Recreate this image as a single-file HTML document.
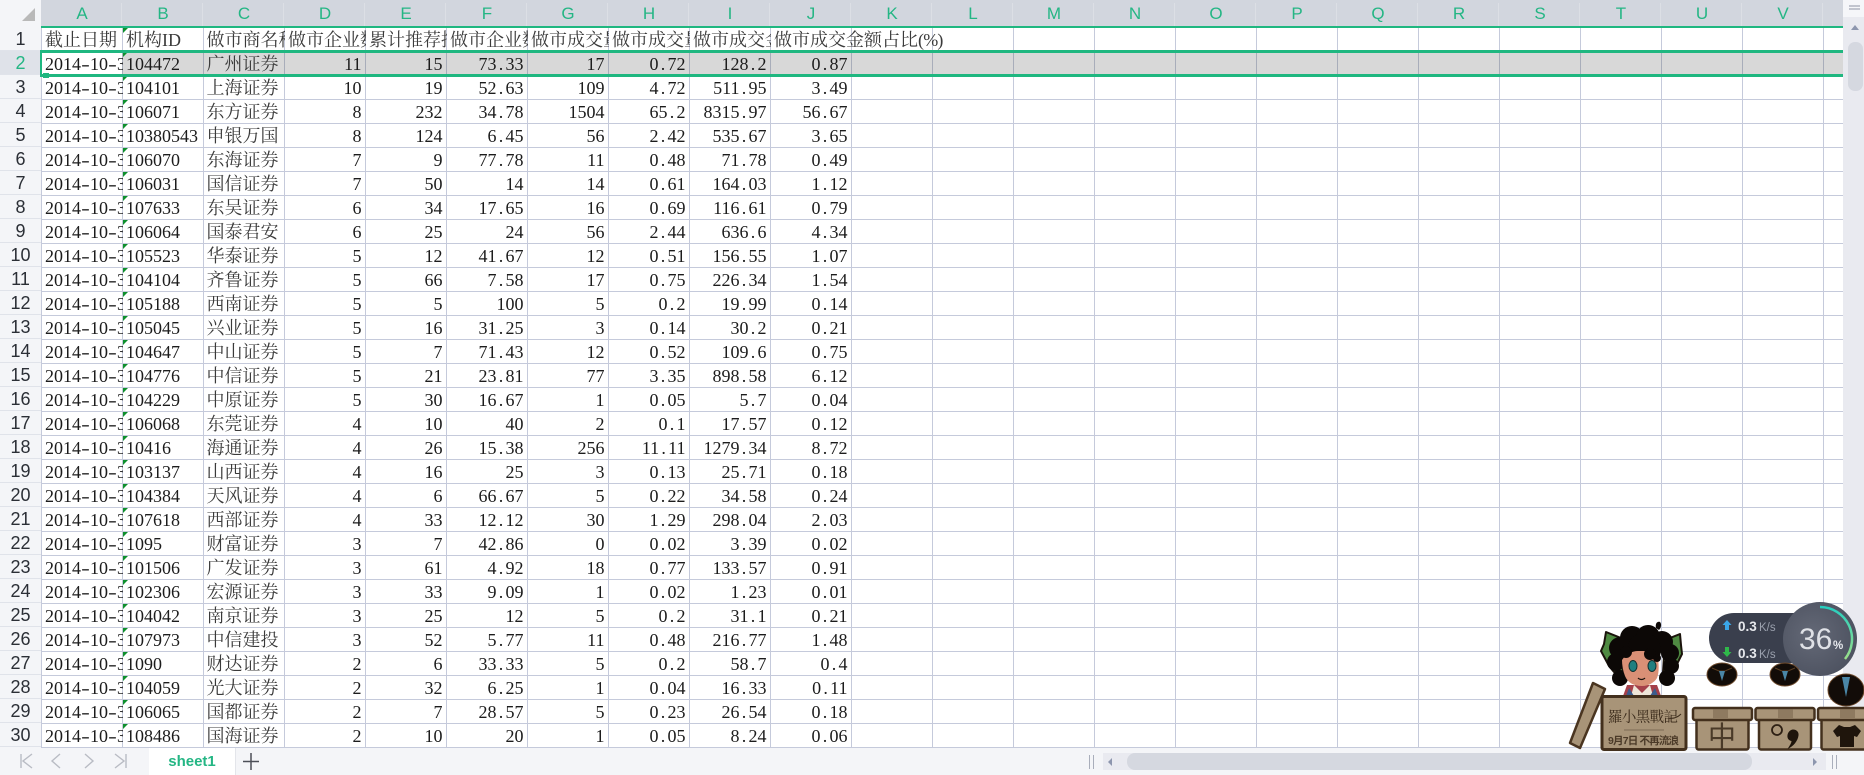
<!DOCTYPE html>
<html lang="zh-CN">
<head>
<meta charset="utf-8">
<title>sheet1</title>
<style>
html,body{margin:0;padding:0;background:#fff}
#p{position:relative;width:1864px;height:775px;overflow:hidden;background:#fff;font-family:"Liberation Serif","Noto Serif CJK SC",serif;font-size:18px;color:#1c1c1c}
#p div{position:absolute}
#grid{left:41px;top:27px;width:1802px;height:721px;background-image:linear-gradient(to right,#c5cadb 1px,transparent 1px),linear-gradient(to bottom,#c5cadb 1px,transparent 1px);background-size:81px 100%,100% 24px}
#sel{left:122px;top:53px;width:1721px;height:21px;background-color:#d8d8d8;background-image:linear-gradient(to right,#a8adba 1px,transparent 1px);background-size:81px 100%}
#colh{left:0;top:0;width:1843px;height:26px;background:#d2d6de}
#colh span{position:absolute;top:3px;width:81px;height:23px;padding-left:2px;line-height:21px;text-align:center;font-family:"Liberation Sans",sans-serif;font-size:17px;color:#24b684;box-sizing:border-box;border-right:1px solid #dcdfe5}
#corner{left:0;top:0;width:41px;height:27px;background:#f4f5f8}
#tri{left:22px;top:8px;width:0;height:0;border-style:solid;border-width:0 0 13px 13px;border-color:transparent transparent #b9b9b9 transparent}
#rowh{left:0;top:27px;width:41px;height:721px;background:#f4f5f8}
#rowh span{position:absolute;left:0;width:41px;height:24px;line-height:25px;text-align:center;font-family:"Liberation Sans",sans-serif;font-size:18px;color:#2b2f36;box-sizing:border-box;border-bottom:1px solid #e0e3ea}
#rowh span.a{background:#dfe2e9;color:#24b684}
.r{left:42px;width:1700px;height:23px;display:flex;line-height:25px}
.r span{position:relative;flex:none;width:81px;height:23px;box-sizing:border-box;padding:0 4.500px 0 3px;overflow:hidden;white-space:nowrap;text-align:right}
.r span:nth-child(1),.r span:nth-child(2),.r span:nth-child(3){text-align:left}
.r span:nth-child(2){padding-left:3px}
.r span:nth-child(3){padding-left:2.500px;color:#3a3a3a}
.r span:nth-child(2)::before{content:"";position:absolute;left:0;top:0;width:0;height:0;border-style:solid;border-width:5px 5px 0 0;border-color:#0e8f2d transparent transparent transparent}
.h{line-height:24px}
.h span{text-align:left!important;color:#3a3a3a;padding-left:3px}
.h span.o{overflow:visible;position:relative;z-index:2}
.h b{font-weight:normal;letter-spacing:-.8px}
i,u{display:inline-block;width:.5em;text-align:center;font-style:normal;text-decoration:none}
u{transform:scaleX(1.45)}
.g{background:#1fb780}
#bot{left:0;top:748px;width:1864px;height:27px;background:#f4f5f8}
#vs{left:1843px;top:0;width:21px;height:748px;background:#e9eaf0}
#vst{left:1843px;top:0;width:21px;height:17px;background:#f5f6f9}
#vth{left:1848px;top:42px;width:15px;height:49px;border-radius:7px;background:#d5d8e0}
#tab{left:149px;top:748px;width:87px;height:27px;background:#fff;border-right:1px solid #e3e5ea;box-sizing:border-box;text-align:center;line-height:27px;font-family:"Liberation Sans",sans-serif;font-weight:bold;font-size:15px;color:#24b684}
#hs{left:1103px;top:753px;width:723px;height:17px;background:#e9eaf0}
#hth{left:1127px;top:753px;width:625px;height:17px;border-radius:8px;background:#d5d8e0}
svg{position:absolute;left:0;top:0}
</style>
</head>
<body>
<div id="p">
<div id="grid"></div>
<div id="sel"></div>
<div style="left:42px;top:53px;width:80px;height:21px;background:#fff"></div>

<div class="r h" style="top:28px"><span>截止日期</span><span>机构ID</span><span>做市商名称</span><span>做市企业数量</span><span>累计推荐挂牌</span><span>做市企业数量</span><span>做市成交量</span><span>做市成交量</span><span>做市成交金额</span><span class="o">做市成交金额占比<b>(%)</b></span></div>
<div class="r" style="top:52px"><span>2014<u>-</u>10<u>-</u>31</span><span>104472</span><span>广州证券</span><span>11</span><span>15</span><span>73<i>.</i>33</span><span>17</span><span>0<i>.</i>72</span><span>128<i>.</i>2</span><span>0<i>.</i>87</span></div>
<div class="r" style="top:76px"><span>2014<u>-</u>10<u>-</u>31</span><span>104101</span><span>上海证券</span><span>10</span><span>19</span><span>52<i>.</i>63</span><span>109</span><span>4<i>.</i>72</span><span>511<i>.</i>95</span><span>3<i>.</i>49</span></div>
<div class="r" style="top:100px"><span>2014<u>-</u>10<u>-</u>31</span><span>106071</span><span>东方证券</span><span>8</span><span>232</span><span>34<i>.</i>78</span><span>1504</span><span>65<i>.</i>2</span><span>8315<i>.</i>97</span><span>56<i>.</i>67</span></div>
<div class="r" style="top:124px"><span>2014<u>-</u>10<u>-</u>31</span><span>10380543</span><span>申银万国</span><span>8</span><span>124</span><span>6<i>.</i>45</span><span>56</span><span>2<i>.</i>42</span><span>535<i>.</i>67</span><span>3<i>.</i>65</span></div>
<div class="r" style="top:148px"><span>2014<u>-</u>10<u>-</u>31</span><span>106070</span><span>东海证券</span><span>7</span><span>9</span><span>77<i>.</i>78</span><span>11</span><span>0<i>.</i>48</span><span>71<i>.</i>78</span><span>0<i>.</i>49</span></div>
<div class="r" style="top:172px"><span>2014<u>-</u>10<u>-</u>31</span><span>106031</span><span>国信证券</span><span>7</span><span>50</span><span>14</span><span>14</span><span>0<i>.</i>61</span><span>164<i>.</i>03</span><span>1<i>.</i>12</span></div>
<div class="r" style="top:196px"><span>2014<u>-</u>10<u>-</u>31</span><span>107633</span><span>东吴证券</span><span>6</span><span>34</span><span>17<i>.</i>65</span><span>16</span><span>0<i>.</i>69</span><span>116<i>.</i>61</span><span>0<i>.</i>79</span></div>
<div class="r" style="top:220px"><span>2014<u>-</u>10<u>-</u>31</span><span>106064</span><span>国泰君安</span><span>6</span><span>25</span><span>24</span><span>56</span><span>2<i>.</i>44</span><span>636<i>.</i>6</span><span>4<i>.</i>34</span></div>
<div class="r" style="top:244px"><span>2014<u>-</u>10<u>-</u>31</span><span>105523</span><span>华泰证券</span><span>5</span><span>12</span><span>41<i>.</i>67</span><span>12</span><span>0<i>.</i>51</span><span>156<i>.</i>55</span><span>1<i>.</i>07</span></div>
<div class="r" style="top:268px"><span>2014<u>-</u>10<u>-</u>31</span><span>104104</span><span>齐鲁证券</span><span>5</span><span>66</span><span>7<i>.</i>58</span><span>17</span><span>0<i>.</i>75</span><span>226<i>.</i>34</span><span>1<i>.</i>54</span></div>
<div class="r" style="top:292px"><span>2014<u>-</u>10<u>-</u>31</span><span>105188</span><span>西南证券</span><span>5</span><span>5</span><span>100</span><span>5</span><span>0<i>.</i>2</span><span>19<i>.</i>99</span><span>0<i>.</i>14</span></div>
<div class="r" style="top:316px"><span>2014<u>-</u>10<u>-</u>31</span><span>105045</span><span>兴业证券</span><span>5</span><span>16</span><span>31<i>.</i>25</span><span>3</span><span>0<i>.</i>14</span><span>30<i>.</i>2</span><span>0<i>.</i>21</span></div>
<div class="r" style="top:340px"><span>2014<u>-</u>10<u>-</u>31</span><span>104647</span><span>中山证券</span><span>5</span><span>7</span><span>71<i>.</i>43</span><span>12</span><span>0<i>.</i>52</span><span>109<i>.</i>6</span><span>0<i>.</i>75</span></div>
<div class="r" style="top:364px"><span>2014<u>-</u>10<u>-</u>31</span><span>104776</span><span>中信证券</span><span>5</span><span>21</span><span>23<i>.</i>81</span><span>77</span><span>3<i>.</i>35</span><span>898<i>.</i>58</span><span>6<i>.</i>12</span></div>
<div class="r" style="top:388px"><span>2014<u>-</u>10<u>-</u>31</span><span>104229</span><span>中原证券</span><span>5</span><span>30</span><span>16<i>.</i>67</span><span>1</span><span>0<i>.</i>05</span><span>5<i>.</i>7</span><span>0<i>.</i>04</span></div>
<div class="r" style="top:412px"><span>2014<u>-</u>10<u>-</u>31</span><span>106068</span><span>东莞证券</span><span>4</span><span>10</span><span>40</span><span>2</span><span>0<i>.</i>1</span><span>17<i>.</i>57</span><span>0<i>.</i>12</span></div>
<div class="r" style="top:436px"><span>2014<u>-</u>10<u>-</u>31</span><span>10416</span><span>海通证券</span><span>4</span><span>26</span><span>15<i>.</i>38</span><span>256</span><span>11<i>.</i>11</span><span>1279<i>.</i>34</span><span>8<i>.</i>72</span></div>
<div class="r" style="top:460px"><span>2014<u>-</u>10<u>-</u>31</span><span>103137</span><span>山西证券</span><span>4</span><span>16</span><span>25</span><span>3</span><span>0<i>.</i>13</span><span>25<i>.</i>71</span><span>0<i>.</i>18</span></div>
<div class="r" style="top:484px"><span>2014<u>-</u>10<u>-</u>31</span><span>104384</span><span>天风证券</span><span>4</span><span>6</span><span>66<i>.</i>67</span><span>5</span><span>0<i>.</i>22</span><span>34<i>.</i>58</span><span>0<i>.</i>24</span></div>
<div class="r" style="top:508px"><span>2014<u>-</u>10<u>-</u>31</span><span>107618</span><span>西部证券</span><span>4</span><span>33</span><span>12<i>.</i>12</span><span>30</span><span>1<i>.</i>29</span><span>298<i>.</i>04</span><span>2<i>.</i>03</span></div>
<div class="r" style="top:532px"><span>2014<u>-</u>10<u>-</u>31</span><span>1095</span><span>财富证券</span><span>3</span><span>7</span><span>42<i>.</i>86</span><span>0</span><span>0<i>.</i>02</span><span>3<i>.</i>39</span><span>0<i>.</i>02</span></div>
<div class="r" style="top:556px"><span>2014<u>-</u>10<u>-</u>31</span><span>101506</span><span>广发证券</span><span>3</span><span>61</span><span>4<i>.</i>92</span><span>18</span><span>0<i>.</i>77</span><span>133<i>.</i>57</span><span>0<i>.</i>91</span></div>
<div class="r" style="top:580px"><span>2014<u>-</u>10<u>-</u>31</span><span>102306</span><span>宏源证券</span><span>3</span><span>33</span><span>9<i>.</i>09</span><span>1</span><span>0<i>.</i>02</span><span>1<i>.</i>23</span><span>0<i>.</i>01</span></div>
<div class="r" style="top:604px"><span>2014<u>-</u>10<u>-</u>31</span><span>104042</span><span>南京证券</span><span>3</span><span>25</span><span>12</span><span>5</span><span>0<i>.</i>2</span><span>31<i>.</i>1</span><span>0<i>.</i>21</span></div>
<div class="r" style="top:628px"><span>2014<u>-</u>10<u>-</u>31</span><span>107973</span><span>中信建投</span><span>3</span><span>52</span><span>5<i>.</i>77</span><span>11</span><span>0<i>.</i>48</span><span>216<i>.</i>77</span><span>1<i>.</i>48</span></div>
<div class="r" style="top:652px"><span>2014<u>-</u>10<u>-</u>31</span><span>1090</span><span>财达证券</span><span>2</span><span>6</span><span>33<i>.</i>33</span><span>5</span><span>0<i>.</i>2</span><span>58<i>.</i>7</span><span>0<i>.</i>4</span></div>
<div class="r" style="top:676px"><span>2014<u>-</u>10<u>-</u>31</span><span>104059</span><span>光大证券</span><span>2</span><span>32</span><span>6<i>.</i>25</span><span>1</span><span>0<i>.</i>04</span><span>16<i>.</i>33</span><span>0<i>.</i>11</span></div>
<div class="r" style="top:700px"><span>2014<u>-</u>10<u>-</u>31</span><span>106065</span><span>国都证券</span><span>2</span><span>7</span><span>28<i>.</i>57</span><span>5</span><span>0<i>.</i>23</span><span>26<i>.</i>54</span><span>0<i>.</i>18</span></div>
<div class="r" style="top:724px"><span>2014<u>-</u>10<u>-</u>31</span><span>108486</span><span>国海证券</span><span>2</span><span>10</span><span>20</span><span>1</span><span>0<i>.</i>05</span><span>8<i>.</i>24</span><span>0<i>.</i>06</span></div>

<div id="colh">
<span style="left:41px">A</span><span style="left:122px">B</span><span style="left:203px">C</span><span style="left:284px">D</span><span style="left:365px">E</span><span style="left:446px">F</span><span style="left:527px">G</span><span style="left:608px">H</span><span style="left:689px">I</span><span style="left:770px">J</span><span style="left:851px">K</span><span style="left:932px">L</span><span style="left:1013px">M</span><span style="left:1094px">N</span><span style="left:1175px">O</span><span style="left:1256px">P</span><span style="left:1337px">Q</span><span style="left:1418px">R</span><span style="left:1499px">S</span><span style="left:1580px">T</span><span style="left:1661px">U</span><span style="left:1742px">V</span>
</div>
<div id="corner"></div>
<div id="tri"></div>
<div id="rowh">
<span style="top:0">1</span><span class="a" style="top:24px">2</span><span style="top:48px">3</span><span style="top:72px">4</span><span style="top:96px">5</span><span style="top:120px">6</span><span style="top:144px">7</span><span style="top:168px">8</span><span style="top:192px">9</span><span style="top:216px">10</span><span style="top:240px">11</span><span style="top:264px">12</span><span style="top:288px">13</span><span style="top:312px">14</span><span style="top:336px">15</span><span style="top:360px">16</span><span style="top:384px">17</span><span style="top:408px">18</span><span style="top:432px">19</span><span style="top:456px">20</span><span style="top:480px">21</span><span style="top:504px">22</span><span style="top:528px">23</span><span style="top:552px">24</span><span style="top:576px">25</span><span style="top:600px">26</span><span style="top:624px">27</span><span style="top:648px">28</span><span style="top:672px">29</span><span style="top:696px">30</span>
</div>

<div class="g" style="left:41px;top:26px;width:1802px;height:2px"></div>
<div class="g" style="left:41px;top:50px;width:1802px;height:3px"></div>
<div class="g" style="left:41px;top:74px;width:1802px;height:3px"></div>
<div class="g" style="left:40px;top:50px;width:2px;height:27px"></div>
<div class="g" style="left:43px;top:73px;width:6px;height:5px;border:0"></div>

<div id="vs"></div>
<div id="vst"></div>
<div id="vth"></div>
<div id="bot"></div>
<div id="tab">sheet1</div>
<div id="hs"></div>
<div id="hth"></div>

<svg width="1864" height="775" viewBox="0 0 1864 775" xmlns="http://www.w3.org/2000/svg">
  <defs>
    <linearGradient id="ring" x1="0" y1="0" x2="0" y2="1"><stop offset="0" stop-color="#27cfc0"/><stop offset="1" stop-color="#9be08a"/></linearGradient>
    <radialGradient id="dial" cx=".4" cy=".45" r=".7"><stop offset="0" stop-color="#646977"/><stop offset="1" stop-color="#4a4f5d"/></radialGradient>
  </defs>
  <!-- scrollbar details -->
  <path d="M1849 6h11M1849 9h11" stroke="#8d93a3" stroke-width="1"/>
  <path d="M1855 25l4 5h-8z" fill="#8d96ae"/>
  <path d="M1108 762l4-4v8z" fill="#8d96ae"/>
  <path d="M1817 762l-4-4v8z" fill="#8d96ae"/>
  <path d="M1089.5 755v14M1093.5 755v14M1832.5 755v14M1836.5 755v14" stroke="#a9aebb" stroke-width="1"/>
  <!-- sheet nav -->
  <g fill="none" stroke="#b9bcc4" stroke-width="1.4">
    <path d="M21 754v14M32 754l-9 7 9 7"/>
    <path d="M60 754l-8 7 8 7"/>
    <path d="M85 754l8 7-8 7"/>
    <path d="M115 754l9 7-9 7M126 754v14"/>
  </g>
  <path d="M251 753v17M243 761.500h16" stroke="#4c4f57" stroke-width="1.500" fill="none"/>

  <!-- speed widget -->
  <rect x="1709" y="613" width="130" height="50" rx="25" fill="#3a3f4d"/>
  <circle cx="1820" cy="639" r="37" fill="url(#dial)"/>
  <path d="M1820 607A32 32 0 0 1 1845 659" fill="none" stroke="url(#ring)" stroke-width="2.500"/>
  <path d="M1727 620l4.500 5h-2.500v5h-4v-5h-2.500z" fill="#3aa6e8"/>
  <path d="M1727 657l4.500-5h-2.500v-5h-4v5h-2.500z" fill="#2fb84a"/>
  <g font-family="Liberation Sans,sans-serif">
    <text x="1738" y="631" font-size="13.500" font-weight="bold" fill="#e6e8ec">0.3</text>
    <text x="1759" y="631" font-size="11.500" fill="#9aa0ad">K/s</text>
    <text x="1738" y="658" font-size="13.500" font-weight="bold" fill="#e6e8ec">0.3</text>
    <text x="1759" y="658" font-size="11.500" fill="#9aa0ad">K/s</text>
    <text x="1799" y="649" font-size="30" fill="#dfe1e6">36</text>
    <text x="1833" y="649" font-size="11.500" font-weight="bold" fill="#e8eaee">%</text>
  </g>

  <!-- cat ear blobs -->
  <g>
    <ellipse cx="1722" cy="674.500" rx="15" ry="11.500" fill="#120c08" stroke="#6d4a2c" stroke-width="1"/>
    <path d="M1712 668l7 3h6l7-3" fill="none" stroke="#5a3d22" stroke-width="1"/>
    <path d="M1719 671h6l-3 10z" fill="#4a86a6"/>
    <ellipse cx="1785" cy="674.500" rx="15" ry="11.500" fill="#120c08" stroke="#6d4a2c" stroke-width="1"/>
    <path d="M1775 668l7 3h6l7-3" fill="none" stroke="#5a3d22" stroke-width="1"/>
    <path d="M1782 671h6l-3 10z" fill="#4a86a6"/>
    <ellipse cx="1846" cy="690" rx="18" ry="16" fill="#120c08" stroke="#6d4a2c" stroke-width="1"/>
    <path d="M1842 677h8l-4 20z" fill="#4a86a6"/>
  </g>

  <!-- character -->
  <path d="M1606 632l15 6 2 34-9 0-5-6-8-15 3-7z" fill="#4f8a42" stroke="#1b130c" stroke-width="2" stroke-linejoin="round"/>
  <path d="M1680 634l-15 6-2 32 9 0 4-6 6-12-1-9z" fill="#4f8a42" stroke="#1b130c" stroke-width="2" stroke-linejoin="round"/>
  <path d="M1627 685h30l4 11h-38z" fill="#a5404a"/>
  <path d="M1634 685l8 8 8-8 3 11h-22z" fill="#efe6d8"/>
  <path d="M1626 696l3-8 5 8zM1658 696l-3-8-5 8z" fill="#3c5c8c"/>
  <g fill="#0c0806">
    <path d="M1656 628c-1-4 1-7 4-6 2 2 1 6-1 8z"/>
    <circle cx="1620" cy="648" r="11"/>
    <circle cx="1632" cy="638" r="12"/>
    <circle cx="1648" cy="637" r="12"/>
    <circle cx="1662" cy="642" r="11"/>
    <circle cx="1670" cy="653" r="9"/>
    <circle cx="1671" cy="666" r="8"/>
    <circle cx="1667" cy="678" r="8"/>
    <circle cx="1616" cy="662" r="9"/>
    <circle cx="1620" cy="678" r="8"/>
    <circle cx="1644" cy="650" r="17"/>
  </g>
  <path d="M1622 660c4-6 10-9 16-9h10l10 8c1 7 1 14-1 19-3 5-9 8-15 8-8 0-14-3-17-10-2-5-3-11-3-16z" fill="#d99076"/>
  <g fill="#0c0806">
    <circle cx="1626" cy="652" r="6"/>
    <circle cx="1650" cy="654" r="6"/>
    <circle cx="1657" cy="658" r="4"/>
  </g>
  <ellipse cx="1633" cy="666" rx="4" ry="5.500" fill="#1f7f80" stroke="#10302f" stroke-width="1"/>
  <ellipse cx="1652" cy="666" rx="4" ry="5.500" fill="#1f7f80" stroke="#10302f" stroke-width="1"/>
  <path d="M1638 678c2 2 5 2 7 0" fill="none" stroke="#1a120c" stroke-width="1.200"/>

  <!-- big box -->
  <path d="M1593 683l12 6-25 59-10-5z" fill="#a89478" stroke="#4a3520" stroke-width="2.500" stroke-linejoin="round"/>
  <rect x="1602" y="696.500" width="84" height="53" rx="2" fill="#a89478" stroke="#43301d" stroke-width="3"/>
  <text x="1608" y="722" font-family="Noto Serif CJK SC,Liberation Serif,serif" font-size="14.500" fill="#3a2a1a" textLength="70">羅小黑戰記</text>
  <path d="M1668 718c5 1 9 0 13-4" fill="none" stroke="#3a2a1a" stroke-width="1"/>
  <path d="M1624 730h40" stroke="#8a7860" stroke-width="1.500"/>
  <text x="1608" y="744" font-family="Liberation Sans,Noto Sans CJK SC,sans-serif" font-size="10.500" font-weight="bold" fill="#4b3a28" textLength="71">9月7日 不再流浪</text>

  <!-- small boxes -->
  <g fill="#a89478" stroke="#43301d" stroke-width="2.500" stroke-linejoin="round">
    <rect x="1696.500" y="718" width="52" height="31.500" rx="2"/>
    <rect x="1693" y="708" width="59" height="12" rx="2"/>
    <rect x="1759" y="718" width="52" height="31.500" rx="2"/>
    <rect x="1755.500" y="708" width="59" height="12" rx="2"/>
    <rect x="1821.500" y="718" width="52" height="31.500" rx="2"/>
    <rect x="1818" y="708" width="59" height="12" rx="2"/>
  </g>
  <rect x="1713" y="709.500" width="15" height="9.500" fill="#8e7a60"/>
  <rect x="1778" y="709.500" width="15" height="9.500" fill="#8e7a60"/>
  <rect x="1840" y="709.500" width="15" height="9.500" fill="#8e7a60"/>
  <text x="1722" y="746" text-anchor="middle" font-family="Noto Sans CJK SC,sans-serif" font-size="28" fill="#4a3a28">中</text>
  <circle cx="1777" cy="730" r="5" fill="none" stroke="#2e2014" stroke-width="1.800"/>
  <path d="M1793 729.500c4 0 6 3 5.500 6-.5 5-5 11-11 13.500 2-3 4-6 4-8-3-.5-4.500-3-4-6 .5-3 3-5.500 5.500-5.500z" fill="#1f150c"/>
  <path d="M1839 725l5 2h6l5-2 6 6-4 6-3-1v11h-14v-11l-3 1-4-6z" fill="#1f150c"/>
</svg>
</div>
</body>
</html>
